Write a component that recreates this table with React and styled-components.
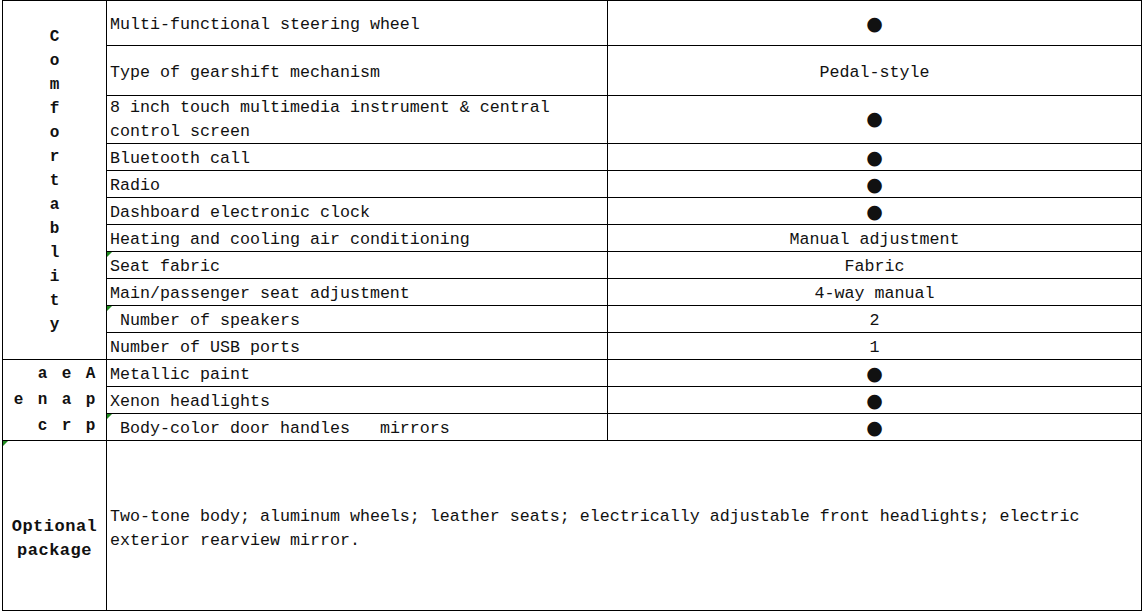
import React from "react";
import { createGlobalStyle, styled } from "styled-components";

const rows = [
  { label: "Multi-functional steering wheel", value: "●", height: 45 },
  { label: "Type of gearshift mechanism", value: "Pedal-style", height: 50 },
  {
    label: "8 inch touch multimedia instrument & central control screen",
    value: "●",
    height: 48,
    tight: true,
  },
  { label: "Bluetooth call", value: "●" },
  { label: "Radio", value: "●" },
  { label: "Dashboard electronic clock", value: "●" },
  { label: "Heating and cooling air conditioning", value: "Manual adjustment" },
  { label: "Seat fabric", value: "Fabric", flag: true },
  { label: "Main/passenger seat adjustment", value: "4-way manual" },
  { label: " Number of speakers", value: "2", flag: true },
  { label: "Number of USB ports", value: "1" },
  { label: "Metallic paint", value: "●" },
  { label: "Xenon headlights", value: "●" },
  { label: " Body-color door handles   mirrors", value: "●", flag: true },
];

// vertical "Appearance" as the sheet shows it: columns right to left
const appearance = [
  ["A", 4, 1],
  ["p", 4, 2],
  ["p", 4, 3],
  ["e", 3, 1],
  ["a", 3, 2],
  ["r", 3, 3],
  ["a", 2, 1],
  ["n", 2, 2],
  ["c", 2, 3],
  ["e", 1, 2],
];

function App() {
  return (
    <>
      <GlobalStyle />
      <Sheet>
        <colgroup>
          <col style={{ width: 104 }} />
          <col style={{ width: 501 }} />
          <col style={{ width: 534 }} />
        </colgroup>
        <tbody>
          {rows.map((row, index) => (
            <Row key={index} $height={row.height || 27}>
              {index === 0 && (
                <Group rowSpan={11}>
                  <Stack>
                    {"Comfortablity".split("").map((ch, i) => (
                      <span key={i}>{ch}</span>
                    ))}
                  </Stack>
                </Group>
              )}
              {index === 11 && (
                <Group rowSpan={3}>
                  <Letters>
                    {appearance.map(([ch, col, line], i) => (
                      <Letter key={i} $col={col} $line={line}>
                        {ch}
                      </Letter>
                    ))}
                  </Letters>
                </Group>
              )}
              <Label $flag={row.flag} $tight={row.tight}>
                {row.label}
              </Label>
              <Value $tight={row.tight}>
                {row.value === "●" ? <Dot>●</Dot> : row.value}
              </Value>
            </Row>
          ))}
          <Row $height={170}>
            <Group $flag>
              <Title>
                Optional
                <br />
                package
              </Title>
            </Group>
            <Note colSpan={2}>
              Two-tone body; aluminum wheels; leather seats; electrically
              adjustable front headlights; electric exterior rearview mirror.
            </Note>
          </Row>
        </tbody>
      </Sheet>
    </>
  );
}

const GlobalStyle = createGlobalStyle`
  body {
    margin: 0;
    background: #ffffff;
    font-family: "Liberation Mono", monospace;
    color: #111111;
  }
`;

const Sheet = styled.table`
  width: 1139px;
  margin-left: 2px;
  table-layout: fixed;
  border-collapse: collapse;
  font-size: 16.67px;
`;

const Row = styled.tr`
  height: ${(props) => props.$height}px;
`;

const Cell = styled.td`
  position: relative;
  padding: ${(props) => (props.$tight ? "0 3px" : "3px 3px 0")};
  border: 1px solid #000000;
  line-height: ${(props) => (props.$tight ? "23.5px" : "23px")};
  vertical-align: middle;

  &::before {
    content: "";
    display: ${(props) => (props.$flag ? "block" : "none")};
    position: absolute;
    top: 0;
    left: 0;
    border-top: 5px solid #1f8a1f;
    border-right: 5px solid transparent;
  }
`;

const Label = styled(Cell)`
  white-space: pre-wrap;
`;

const Value = styled(Cell)`
  text-align: center;
`;

const Dot = styled.span`
  display: inline-block;
  vertical-align: top;
  font-family: "DejaVu Sans", sans-serif;
  font-size: 19px;
  line-height: 20px;
`;

const Group = styled(Cell)`
  padding: 0;
  text-align: center;
  font-weight: 700;
`;

const Stack = styled.div`
  display: flex;
  flex-direction: column;
  align-items: center;
  padding-top: 2px;
  font-size: 16px;
  line-height: 24px;
`;

const Letters = styled.div`
  display: grid;
  grid-template-columns: repeat(4, 24px);
  grid-template-rows: repeat(3, 26px);
  justify-content: center;
  align-items: center;
  font-size: 16px;
  padding-top: 1px;
`;

const Letter = styled.span`
  grid-column: ${(props) => props.$col};
  grid-row: ${(props) => props.$line};
`;

const Title = styled.div`
  padding-top: 26px;
  font-size: 17px;
  line-height: 24px;
  letter-spacing: 0.5px;
`;

const Note = styled(Cell)`
  padding-top: 6px;
  line-height: 24px;
`;

export default App;
